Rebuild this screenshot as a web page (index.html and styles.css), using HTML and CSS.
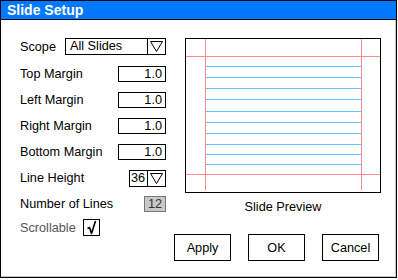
FILE: index.html
```html
<!DOCTYPE html>
<html lang="en">
  <head>
    <meta charset="UTF-8" />
    <title>Slide Setup</title>
    <link rel="stylesheet" href="styles.css">
  </head>
  <body>
    <div class="dialog">
      <div class="titlebar">Slide Setup</div>

      <div class="content">
        <div class="form">
          <div class="row row-scope">
            <span>Scope</span>
            <div class="select select-wide">
              <span class="select-value">All Slides</span>
              <span class="select-arrow">
                <svg width="17" height="15" viewBox="0 0 17 15"><polygon points="2.5,2.5 14.5,2.5 8.5,12.5" fill="none" stroke="#000" stroke-width="1"/></svg>
              </span>
            </div>
          </div>
          <div class="row">
            <span>Top Margin</span>
            <div class="field">1.0</div>
          </div>
          <div class="row">
            <span>Left Margin</span>
            <div class="field">1.0</div>
          </div>
          <div class="row">
            <span>Right Margin</span>
            <div class="field">1.0</div>
          </div>
          <div class="row">
            <span>Bottom Margin</span>
            <div class="field">1.0</div>
          </div>
          <div class="row">
            <span>Line Height</span>
            <div class="select select-small">
              <span class="select-value">36</span>
              <span class="select-arrow">
                <svg width="17" height="15" viewBox="0 0 17 15"><polygon points="2.5,2.5 14.5,2.5 8.5,12.5" fill="none" stroke="#000" stroke-width="1"/></svg>
              </span>
            </div>
          </div>
          <div class="row">
            <span>Number of Lines</span>
            <div class="readonly">12</div>
          </div>
          <div class="row row-check">
            <span class="muted">Scrollable</span>
            <div class="checkbox">
              <svg width="15" height="15" viewBox="0 0 15 15"><path d="M3.5 8.5 L5.5 7.5 L7.5 13.5 L11.5 1" fill="none" stroke="#000" stroke-width="1.6" stroke-linejoin="round"/></svg>
            </div>
          </div>
        </div>

        <div class="side">
          <div class="preview">
            <svg width="194" height="153" viewBox="0 0 194 153">
              <g stroke="#5cc6fb" stroke-width="1">
                <line x1="19" y1="27.5" x2="175" y2="27.5"/>
                <line x1="19" y1="38.5" x2="175" y2="38.5"/>
                <line x1="19" y1="49.5" x2="175" y2="49.5"/>
                <line x1="19" y1="60.5" x2="175" y2="60.5"/>
                <line x1="19" y1="72.5" x2="175" y2="72.5"/>
                <line x1="19" y1="83.5" x2="175" y2="83.5"/>
                <line x1="19" y1="94.5" x2="175" y2="94.5"/>
                <line x1="19" y1="105.5" x2="175" y2="105.5"/>
                <line x1="19" y1="115.5" x2="175" y2="115.5"/>
                <line x1="19" y1="125.5" x2="175" y2="125.5"/>
              </g>
              <g stroke="#ff8c8c" stroke-width="1">
                <line x1="0" y1="17.5" x2="194" y2="17.5"/>
                <line x1="0" y1="135.5" x2="194" y2="135.5"/>
                <line x1="19.5" y1="0" x2="19.5" y2="151"/>
                <line x1="175.5" y1="0" x2="175.5" y2="151"/>
              </g>
            </svg>
          </div>
          <div class="caption">Slide Preview</div>
          <div class="buttons">
            <div class="btn">Apply</div>
            <div class="btn">OK</div>
            <div class="btn">Cancel</div>
          </div>
        </div>
      </div>
    </div>
  </body>
</html>
```

FILE: styles.css
```css
* {
  box-sizing: border-box;
}
body {
  margin: 0;
  font-family: "Liberation Sans", Arial, sans-serif;
  font-size: 12.7px;
  color: #000;
  background-color: #fff;
}
.dialog {
  width: 397px;
  height: 278px;
  border: 1px solid #000;
  box-shadow: inset -1px -1px 0 #c8c8c8;
  display: flex;
  flex-direction: column;
}
.titlebar {
  height: 19px;
  line-height: 18px;
  padding-left: 6px;
  background-color: #0078ff;
  border-bottom: 1px solid #000;
  color: #fff;
  font-size: 14px;
  font-weight: bold;
}
.content {
  display: grid;
  grid-template-columns: 146px minmax(0, 1fr);
  column-gap: 19px;
  padding: 18px 0 0 19px;
}
.form {
  display: flex;
  flex-direction: column;
  gap: 10px;
}
.row {
  display: flex;
  align-items: center;
  justify-content: space-between;
  height: 16px;
}
.row-scope {
  height: 17px;
  margin-bottom: 1px;
}
.row-check {
  height: 17px;
  margin-top: -3px;
  justify-content: flex-start;
  gap: 7px;
}
.muted {
  color: #555;
}
.select {
  display: flex;
  height: 17px;
  border: 1px solid #000;
}
.select-wide {
  width: 101px;
}
.select-small {
  width: 37px;
}
.select-value {
  flex: 1;
  padding-left: 4px;
  line-height: 15px;
}
.select-small .select-value {
  padding-left: 1px;
}
.select-arrow {
  width: 18px;
  border-left: 1px solid #000;
  display: flex;
}
.field {
  width: 48px;
  height: 16px;
  line-height: 14px;
  border: 1px solid #000;
  text-align: right;
  padding-right: 3px;
}
.readonly {
  width: 22px;
  height: 16px;
  line-height: 14px;
  border: 1px solid #777;
  background-color: #c8c8c8;
  color: #333;
  text-align: center;
}
.checkbox {
  width: 17px;
  height: 17px;
  border: 1px solid #000;
  display: flex;
}
.side {
  display: flex;
  flex-direction: column;
}
.preview {
  width: 196px;
  height: 155px;
  border: 1px solid #000;
}
.preview svg {
  display: block;
}
.caption {
  width: 196px;
  margin-top: 7px;
  line-height: 15px;
  text-align: center;
}
.buttons {
  display: flex;
  justify-content: flex-end;
  gap: 17px;
  margin-top: 19px;
  padding-right: 17px;
}
.btn {
  flex: none;
  width: 57px;
  height: 27px;
  border: 1px solid #000;
  display: flex;
  align-items: center;
  justify-content: center;
}
```
